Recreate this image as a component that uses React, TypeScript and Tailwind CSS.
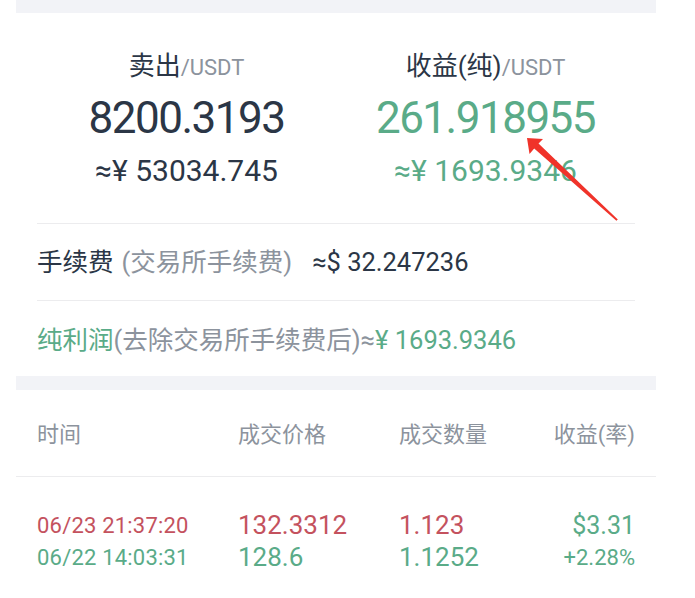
import React from "react";

const font = { fontFamily: '"Roboto", "Noto Sans CJK SC", sans-serif' };

const Arrow: React.FC = () => (
  <svg
    className="absolute left-0 top-0 pointer-events-none"
    width="695"
    height="598"
    viewBox="0 0 695 598"
  >
    <polygon
      fill="#f0332a"
      points="527,138 543,139 538.5,143.5 617.8,219.4 616.4,220.8 534.2,148.6 529.5,154"
    />
  </svg>
);

const App: React.FC = () => {
  return (
    <div
      className="relative w-[695px] h-[598px] bg-white overflow-hidden"
      style={font}
    >
      <div className="mx-4 w-[640px]">
        {/* top band */}
        <div className="h-[13px] bg-[#f2f3f7]" />

        <div className="px-[21px]">
          {/* Sell / Profit summary */}
          <div className="grid grid-cols-2 pt-[37px] pb-[34px] border-b border-[#ececee]">
            <div className="flex flex-col items-center">
              <div className="h-8 leading-8 text-[26px] text-[#2b3646]">
                卖出<span className="text-[22px] text-[#8c939d]">/USDT</span>
              </div>
              <div className="mt-3 h-12 leading-[48px] text-[44px] tracking-[-1.5px] text-[#2b3646]">
                8200.3193
              </div>
              <div className="mt-[11px] h-9 leading-9 text-[30px] text-[#2b3646]">
                ≈¥ 53034.745
              </div>
            </div>
            <div className="flex flex-col items-center">
              <div className="h-8 leading-8 text-[26px] text-[#2b3646]">
                收益(纯)<span className="text-[22px] text-[#8c939d]">/USDT</span>
              </div>
              <div className="mt-3 h-12 leading-[48px] text-[44px] tracking-[-1.5px] text-[#5aab88]">
                261.918955
              </div>
              <div className="mt-[11px] h-9 leading-9 text-[30px] text-[#5aab88]">
                ≈¥ 1693.9346
              </div>
            </div>
          </div>

          {/* Fee row */}
          <div className="flex items-center h-[77px] border-b border-[#ececee] text-[25.5px]">
            <span className="text-[#2b3646]">手续费</span>
            <span className="ml-2 text-[#8c939d]">(交易所手续费)</span>
            <span className="ml-5 text-[#2b3646]">≈$ 32.247236</span>
          </div>

          {/* Net profit row */}
          <div className="flex items-center h-[75px] pt-[3px] text-[25.5px]">
            <span className="text-[#5aab88]">纯利润</span>
            <span className="text-[#8c939d]">(去除交易所手续费后)≈</span>
            <span className="text-[#5aab88]">¥ 1693.9346</span>
          </div>
        </div>

        {/* middle band */}
        <div className="h-[14px] bg-[#f2f3f7]" />

        {/* Table header */}
        <div className="border-b border-[#ececee]">
          <div className="grid grid-cols-[201px_161px_1fr_auto] items-center h-[86px] pt-[2px] px-[21px] text-[22px] text-[#8c939d]">
            <span>时间</span>
            <span>成交价格</span>
            <span>成交数量</span>
            <span className="text-right">收益(率)</span>
          </div>
        </div>

        {/* Table rows */}
        <div className="pt-[29px] px-[21px]">
          <div className="grid grid-cols-[201px_161px_1fr_auto] items-center h-8">
            <span className="text-[22px] tracking-[0.2px] text-[#c4525e]">06/23 21:37:20</span>
            <span className="text-[26px] text-[#c4525e]">132.3312</span>
            <span className="text-[26px] text-[#c4525e]">1.123</span>
            <span className="text-[25px] text-right text-[#5aab88]">$3.31</span>
          </div>
          <div className="grid grid-cols-[201px_161px_1fr_auto] items-center h-8">
            <span className="text-[22px] tracking-[0.2px] text-[#5aab88]">06/22 14:03:31</span>
            <span className="text-[26px] text-[#5aab88]">128.6</span>
            <span className="text-[26px] text-[#5aab88]">1.1252</span>
            <span className="text-[22px] text-right text-[#5aab88]">+2.28%</span>
          </div>
        </div>
      </div>

      <Arrow />
    </div>
  );
};

export default App;
